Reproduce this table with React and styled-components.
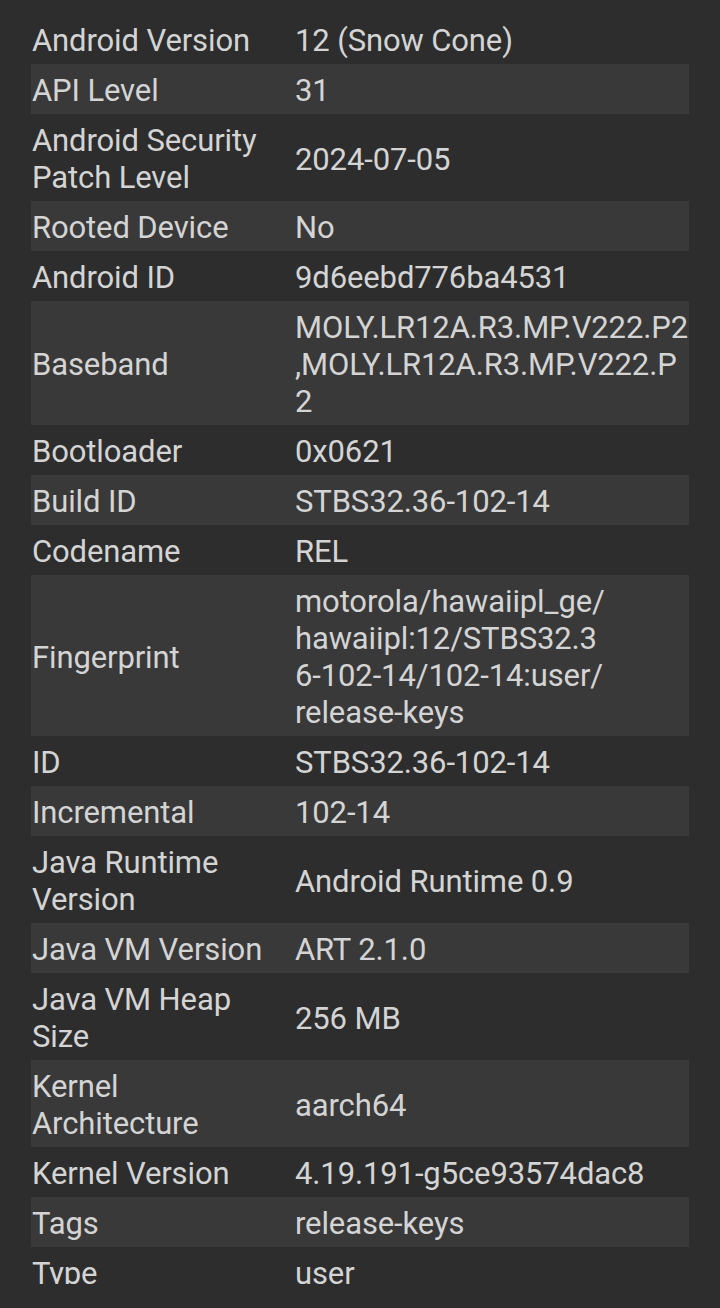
import styled, { createGlobalStyle } from "styled-components";

const GlobalStyle = createGlobalStyle`
    body {
        margin: 0;
        background-color: #2d2d2d;
    }
`;

const Screen = styled.div`
    height: 1284px;
    overflow: hidden;
    padding: 14px 31px 0 31px;
    box-sizing: border-box;
    font-family: Roboto, "Noto Sans", sans-serif;
`;

const InfoTable = styled.div`
    display: flex;
    flex-direction: column;
    width: 658px;
`;

const InfoRow = styled.div`
    display: grid;
    grid-template-columns: 263px 1fr;
    align-items: center;
    padding: 8px 0 5px 1px;
    background-color: ${(p) => (p.$striped ? "#393939" : "transparent")};
`;

const Cell = styled.div`
    font-size: 31px;
    line-height: 37px;
    letter-spacing: -0.12px;
    color: #d4d4d4;
    white-space: nowrap;
`;

const rows = [
    [["Android Version"], ["12 (Snow Cone)"]],
    [["API Level"], ["31"]],
    [["Android Security", "Patch Level"], ["2024-07-05"]],
    [["Rooted Device"], ["No"]],
    [["Android ID"], ["9d6eebd776ba4531"]],
    [["Baseband"], ["MOLY.LR12A.R3.MP.V222.P2", ",MOLY.LR12A.R3.MP.V222.P", "2"]],
    [["Bootloader"], ["0x0621"]],
    [["Build ID"], ["STBS32.36-102-14"]],
    [["Codename"], ["REL"]],
    [["Fingerprint"], ["motorola/hawaiipl_ge/", "hawaiipl:12/STBS32.3", "6-102-14/102-14:user/", "release-keys"]],
    [["ID"], ["STBS32.36-102-14"]],
    [["Incremental"], ["102-14"]],
    [["Java Runtime", "Version"], ["Android Runtime 0.9"]],
    [["Java VM Version"], ["ART 2.1.0"]],
    [["Java VM Heap", "Size"], ["256 MB"]],
    [["Kernel", "Architecture"], ["aarch64"]],
    [["Kernel Version"], ["4.19.191-g5ce93574dac8"]],
    [["Tags"], ["release-keys"]],
    [["Type"], ["user"]],
];

const Lines = ({ lines }) => lines.map((line, i) => (
    <span key={i}>
        {i > 0 && <br />}
        {line}
    </span>
));

const App = () => {
    return <>
        <GlobalStyle />
        <Screen>
            <InfoTable>
                {rows.map(([label, value], i) => (
                    <InfoRow key={label.join(" ")} $striped={i % 2 === 1}>
                        <Cell><Lines lines={label} /></Cell>
                        <Cell><Lines lines={value} /></Cell>
                    </InfoRow>
                ))}
            </InfoTable>
        </Screen>
    </>
}

export default App;
